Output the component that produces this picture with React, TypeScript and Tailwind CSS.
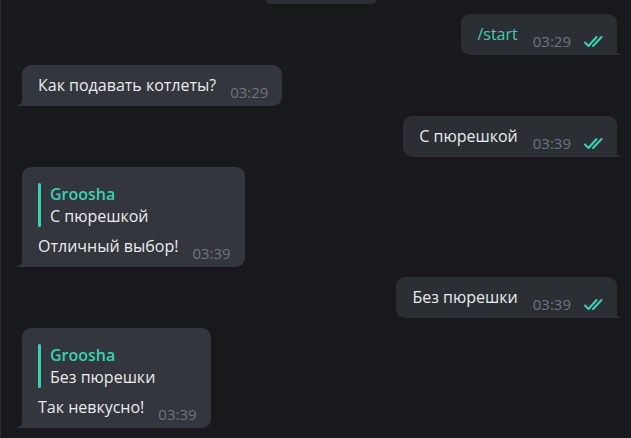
import React from "react";

const font = { fontFamily: '"Open Sans", "Noto Sans", sans-serif' };

type Msg =
  | { out: true; text: string; time: string; accent?: boolean }
  | { out: false; text: string; time: string; reply?: { name: string; text: string } };

const messages: Msg[] = [
  { out: true, text: "/start", time: "03:29", accent: true },
  { out: false, text: "Как подавать котлеты?", time: "03:29" },
  { out: true, text: "С пюрешкой", time: "03:39" },
  { out: false, text: "Отличный выбор!", time: "03:39", reply: { name: "Groosha", text: "С пюрешкой" } },
  { out: true, text: "Без пюрешки", time: "03:39" },
  { out: false, text: "Так невкусно!", time: "03:39", reply: { name: "Groosha", text: "Без пюрешки" } },
];

const DoubleCheck = () => (
  <svg width="24" height="14" viewBox="0 0 24 14" fill="none" className="shrink-0">
    <path d="M2 8.5 L5.5 12 L13.5 3" stroke="#3ccfb4" strokeWidth="2.1" strokeLinecap="round" strokeLinejoin="round" />
    <path d="M10 12 L18.5 3" stroke="#3ccfb4" strokeWidth="2.1" strokeLinecap="round" />
  </svg>
);

// bottom corner flare of a bubble
const Tail = ({ out }: { out: boolean }) =>
  out ? (
    <svg width="8" height="10" viewBox="0 0 8 10" className="absolute bottom-0 -right-[6px]">
      <path d="M0 0 C0 6 2 9 8 10 L0 10 Z" fill="#2b2f33" />
    </svg>
  ) : (
    <svg width="8" height="10" viewBox="0 0 8 10" className="absolute bottom-0 -left-[7px]">
      <path d="M8 0 C8 6 6 9 0 10 L8 10 Z" fill="#33363c" />
    </svg>
  );

const Bubble = ({ m }: { m: Msg }) => {
  if (m.out) {
    return (
      <div className="flex justify-end">
        <div className="relative bg-[#2b2f33] rounded-[9px] rounded-br-none h-[41px] pl-[16px] pr-[10px] pt-[10px] flex items-start">
          <span className={`text-[16px] leading-5 ${m.accent ? "text-[#3ccfb4]" : "text-[#e9ebed]"}`}>{m.text}</span>
          <span className="text-[15px] leading-5 text-[#6d757d] ml-[15px] mt-[7px]">{m.time}</span>
          <span className="ml-[12px] mt-[10px]">
            <DoubleCheck />
          </span>
          <Tail out />
        </div>
      </div>
    );
  }
  return (
    <div className="flex justify-start">
      <div className={`relative bg-[#33363c] rounded-[9px] rounded-bl-none pl-4 pr-[14px] ${m.reply ? "pt-4 pb-1" : "pt-[10px] pb-1"}`}>
        {m.reply && (
          <div className="flex mb-[9px]">
            <div className="w-[3px] bg-[#3ccfb4] rounded-sm" />
            <div className="pl-[9px]">
              <div className="text-[16px] leading-[22px] font-semibold text-[#3ccfb4]">{m.reply.name}</div>
              <div className="text-[16px] leading-[22px] text-[#e9ebed]">{m.reply.text}</div>
            </div>
          </div>
        )}
        <div className="flex items-start">
          <span className="text-[16px] leading-5 text-[#e9ebed]">{m.text}</span>
          <span className="text-[15px] leading-5 text-[#6d757d] ml-[14px] mt-[7px]">{m.time}</span>
        </div>
        <Tail out={false} />
      </div>
    </div>
  );
};

export default function App() {
  return (
    <div className="w-[631px] h-[438px] overflow-hidden bg-[#18191c] border-l border-[#2a2d31]" style={font}>
      <div className="flex justify-center pl-[10px]">
        <div className="w-[110px] h-[4px] bg-[#2b2f33] rounded-b-[6px]" />
      </div>
      <div className="flex flex-col gap-[10px] pt-[10px] pl-[21px] pr-[14px]">
        {messages.map((m, i) => (
          <Bubble key={i} m={m} />
        ))}
      </div>
    </div>
  );
}
